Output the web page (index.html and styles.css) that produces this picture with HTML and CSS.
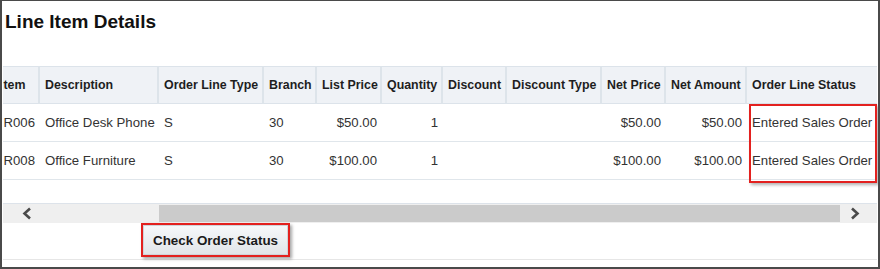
FILE: index.html
```html
<!DOCTYPE html>
<html>
<head>
    <meta charset="utf-8">
    <title>Line Item Details</title>
    <link rel="stylesheet" href="styles.css">
</head>
<body>
<div class="frame">
    <h1 class="title">Line Item Details</h1>

    <div class="grid">
        <div class="grid-scroll">
            <table>
                <colgroup>
                    <col style="width:45px">
                    <col style="width:119px">
                    <col style="width:105px">
                    <col style="width:53px">
                    <col style="width:65px">
                    <col style="width:61px">
                    <col style="width:64px">
                    <col style="width:95px">
                    <col style="width:64px">
                    <col style="width:81px">
                    <col style="width:130px">
                </colgroup>
                <tr>
                    <th>Item</th>
                    <th>Description</th>
                    <th>Order Line Type</th>
                    <th>Branch</th>
                    <th>List Price</th>
                    <th>Quantity</th>
                    <th>Discount</th>
                    <th>Discount Type</th>
                    <th>Net Price</th>
                    <th>Net Amount</th>
                    <th class="last">Order Line Status</th>
                </tr>
                <tr>
                    <td class="num">R006</td>
                    <td>Office Desk Phone</td>
                    <td>S</td>
                    <td>30</td>
                    <td class="num">$50.00</td>
                    <td class="num">1</td>
                    <td></td>
                    <td></td>
                    <td class="num">$50.00</td>
                    <td class="num">$50.00</td>
                    <td>Entered Sales Order</td>
                </tr>
                <tr>
                    <td class="num">R008</td>
                    <td>Office Furniture</td>
                    <td>S</td>
                    <td>30</td>
                    <td class="num">$100.00</td>
                    <td class="num">1</td>
                    <td></td>
                    <td></td>
                    <td class="num">$100.00</td>
                    <td class="num">$100.00</td>
                    <td>Entered Sales Order</td>
                </tr>
            </table>
        </div>
        <!-- callout round the status column -->
        <div class="callout"></div>
    </div>

    <div class="hscroll">
        <div class="arrow">
            <svg width="10" height="13" viewBox="0 0 10 13"><polyline points="8,1.5 2.5,6.5 8,11.5" fill="none" stroke="#4a4a4a" stroke-width="2.6"/></svg>
        </div>
        <div class="thumb"></div>
        <div class="arrow right">
            <svg width="10" height="13" viewBox="0 0 10 13"><polyline points="2,1.5 7.5,6.5 2,11.5" fill="none" stroke="#4a4a4a" stroke-width="2.6"/></svg>
        </div>
    </div>

    <div class="actions">
        <span class="mark"><button>Check Order Status</button></span>
    </div>
    <div class="rule"></div>
</div>
</body>
</html>
```

FILE: styles.css
```css
body {
    margin: 0;
}

.frame {
    width: 880px;
    height: 269px;
    box-sizing: border-box;
    border: 2px solid #4a4a4a;
    border-top-width: 1px;
    padding: 0 1px;
    background: #fff;
    font-family: "Liberation Sans", Arial, sans-serif;
    color: #333;
    overflow: hidden;
}

.title {
    margin: 10px 0 0;
    padding-left: 2px;
    font-size: 19px;
    line-height: 22px;
    color: #111;
}

.grid {
    position: relative;
    margin-top: 33px;
}

.grid-scroll {
    overflow: hidden;
}

table {
    width: 882px;
    margin-left: -8px;
    table-layout: fixed;
    border-collapse: separate;
    border-spacing: 0;
}

th {
    height: 36px;
    padding: 0 5px;
    background: #eff2f6;
    border-top: 1px solid #dce3ea;
    border-bottom: 1px solid #dce3ea;
    border-right: 2px solid #dde4ea;
    text-align: left;
    font-size: 12.4px;
    font-weight: bold;
    color: #1e1e1e;
    white-space: nowrap;
    overflow: hidden;
}

th.last {
    border-right: 0;
}

td {
    height: 37px;
    padding: 0 5px;
    border-bottom: 1px solid #e0e6eb;
    font-size: 13.2px;
    color: #333;
    white-space: nowrap;
    overflow: hidden;
}

.num {
    text-align: right;
}

.callout {
    position: absolute;
    left: 746px;
    top: 38px;
    width: 128px;
    height: 79px;
    box-sizing: border-box;
    border: 2px solid #e3211f;
    box-shadow: 2px 2px 3px rgba(0, 0, 0, .3);
}

.hscroll {
    display: flex;
    height: 19px;
    margin-top: 23px;
    border-top: 1px solid #dde3ea;
    background: #efefef;
}

.arrow {
    width: 48px;
    display: flex;
    align-items: center;
    justify-content: center;
}

.arrow.right {
    width: auto;
    flex: 1;
    justify-content: flex-start;
    padding-left: 10px;
}

.thumb {
    width: 681px;
    margin: 1px 0 1px 108px;
    background: #cbcbcb;
}

.actions {
    display: flex;
    padding-left: 138px;
}

.mark {
    display: flex;
    border: 2px solid #e3211f;
    box-shadow: 2px 2px 3px rgba(0, 0, 0, .35);
}

.mark button {
    width: 145px;
    height: 30px;
    padding: 0;
    border: 1px solid #cfd5da;
    background: linear-gradient(#f6f8fa, #e1e5e9);
    font-family: "Liberation Sans", Arial, sans-serif;
    font-size: 13.4px;
    font-weight: bold;
    color: #1a1a1a;
}

.rule {
    margin-top: 2px;
    border-top: 1px solid #e6e6e6;
}
```
